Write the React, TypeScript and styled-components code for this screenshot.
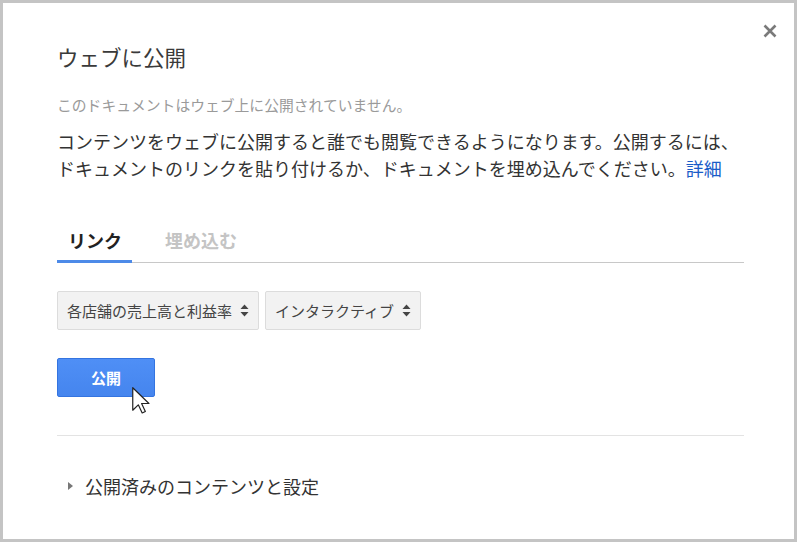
import styled, { createGlobalStyle } from 'styled-components'

const GlobalStyle = createGlobalStyle`
    html, body {
        margin: 0;
        padding: 0;
        background: #ffffff;
    }
    body {
        font-family: 'Noto Sans CJK JP', 'Noto Sans', sans-serif;
        color: #333;
    }
`

const SortArrows = () => (
    <svg width="9" height="13" viewBox="0 0 9 13">
        <path d="M4.5 0.5 L8.5 5 L0.5 5 Z" fill="#444" />
        <path d="M4.5 12.5 L8.5 8 L0.5 8 Z" fill="#444" />
    </svg>
)

const CloseIcon = () => (
    <svg width="14" height="14" viewBox="0 0 14 14">
        <path d="M1.5 1.5 L12.5 12.5 M12.5 1.5 L1.5 12.5" stroke="#7a7a7a" strokeWidth="2.6" />
    </svg>
)

const PointerIcon = () => (
    <svg width="18" height="27" viewBox="0 0 12 18">
        <path
            d="M0.5 0.5 L0.5 15.5 L4.2 11.9 L6.8 17.3 L8.9 16.3 L6.4 11 L11.3 11 Z"
            fill="#fff"
            stroke="#222"
            strokeWidth="0.8"
            strokeLinejoin="round"
        />
    </svg>
)

const App = () => {
    return (
        <>
            <GlobalStyle />
            <Dialog>
                <CloseButton aria-label="閉じる">
                    <CloseIcon />
                </CloseButton>
                <Title>ウェブに公開</Title>
                <Status>このドキュメントはウェブ上に公開されていません。</Status>
                <Description>
                    コンテンツをウェブに公開すると誰でも閲覧できるようになります。公開するには、
                    <br />
                    ドキュメントのリンクを貼り付けるか、ドキュメントを埋め込んでください。<DetailLink>詳細</DetailLink>
                </Description>

                <Tabs>
                    <Tab $active>リンク</Tab>
                    <Tab>埋め込む</Tab>
                </Tabs>

                <SelectRow>
                    <Select>
                        各店舗の売上高と利益率
                        <SortArrows />
                    </Select>
                    <Select>
                        インタラクティブ
                        <SortArrows />
                    </Select>
                </SelectRow>

                <ButtonWrap>
                    <PublishButton>公開</PublishButton>
                    <Cursor>
                        <PointerIcon />
                    </Cursor>
                </ButtonWrap>

                <Divider />

                <Expander>
                    <Caret />
                    公開済みのコンテンツと設定
                </Expander>
            </Dialog>
        </>
    )
}

export default App

const Dialog = styled.div`
    position: relative;
    box-sizing: border-box;
    width: 797px;
    height: 542px;
    border: 3px solid #c4c4c4;
    background: #fff;
    padding: 39px 50px 0 54px;
    display: flex;
    flex-direction: column;
`

const CloseButton = styled.button`
    position: absolute;
    top: 21px;
    right: 17px;
    width: 14px;
    height: 14px;
    padding: 0;
    border: none;
    background: none;
    display: flex;
`

const Title = styled.div`
    font-size: 21.5px;
    line-height: 30px;
    font-weight: 400;
    color: #3a3a3a;
`

const Status = styled.div`
    margin-top: 23px;
    font-size: 14.8px;
    line-height: 20px;
    color: #9a9a9a;
`

const Description = styled.div`
    margin-top: 13px;
    font-size: 18px;
    line-height: 27px;
    color: #333;
    white-space: nowrap;
`

const DetailLink = styled.a`
    color: #1a5cc8;
    text-decoration: none;
`

const Tabs = styled.div`
    margin-top: 46px;
    display: flex;
    gap: 22px;
    border-bottom: 1px solid #c8c8c8;
`

const Tab = styled.div<{ $active?: boolean }>`
    padding: 0 10px 8px 11px;
    margin-bottom: -1px;
    font-size: 18px;
    line-height: 24px;
    font-weight: 700;
    color: ${(p) => (p.$active ? '#222' : '#c4c4c4')};
    border-bottom: 3px solid ${(p) => (p.$active ? '#4d8ae8' : 'transparent')};
`

const SelectRow = styled.div`
    margin-top: 28px;
    display: flex;
    gap: 6px;
`

const Select = styled.div`
    box-sizing: border-box;
    height: 39px;
    padding: 0 9px;
    display: flex;
    align-items: center;
    gap: 8px;
    background: #f2f2f2;
    border: 1px solid #dcdcdc;
    border-radius: 2px;
    font-size: 15px;
    color: #444;
`

const ButtonWrap = styled.div`
    position: relative;
    margin-top: 28px;
    align-self: flex-start;
`

const PublishButton = styled.button`
    box-sizing: border-box;
    width: 98px;
    height: 39px;
    border: 1px solid #3474e0;
    border-radius: 2px;
    background: linear-gradient(#4f8ff6, #4585ee);
    color: #fff;
    font-family: 'Noto Sans CJK JP', sans-serif;
    font-size: 15px;
    font-weight: 700;
    padding: 0;
`

const Cursor = styled.div`
    position: absolute;
    left: 75px;
    top: 29px;
    display: flex;
`

const Divider = styled.div`
    margin-top: 38px;
    height: 1px;
    background: #e3e3e3;
`

const Expander = styled.div`
    margin-top: 38px;
    padding-left: 11px;
    display: flex;
    align-items: center;
    gap: 12px;
    font-size: 18px;
    line-height: 24px;
    color: #333;
`

const Caret = styled.span`
    width: 0;
    height: 0;
    border-top: 4px solid transparent;
    border-bottom: 4px solid transparent;
    border-left: 5px solid #777;
`
